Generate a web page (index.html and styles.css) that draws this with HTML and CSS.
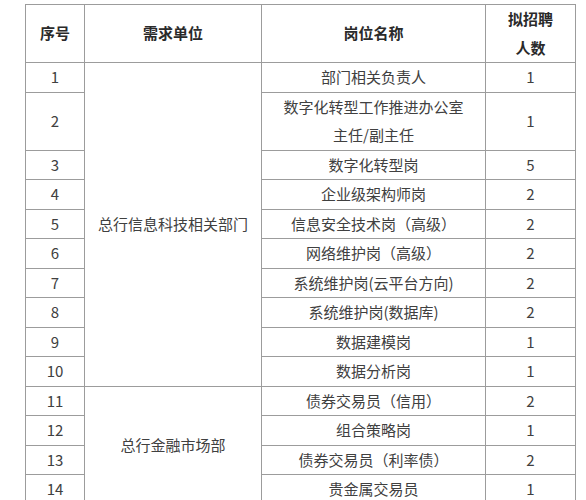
FILE: index.html
```html
<!DOCTYPE html>
<html lang="zh-CN">
<head>
<meta charset="utf-8">
<link rel="stylesheet" href="styles.css">
</head>
<body>
<table class="jobs">
  <colgroup>
    <col class="c-no">
    <col class="c-unit">
    <col class="c-post">
    <col class="c-num">
  </colgroup>
  <thead>
    <tr class="head">
      <th>序号</th>
      <th>需求单位</th>
      <th>岗位名称</th>
      <th>拟招聘<br>人数</th>
    </tr>
  </thead>
  <tbody>
    <tr><td>1</td><td rowspan="10">总行信息科技相关部门</td><td>部门相关负责人</td><td>1</td></tr>
    <tr><td>2</td><td>数字化转型工作推进办公室<br>主任/副主任</td><td>1</td></tr>
    <tr><td>3</td><td>数字化转型岗</td><td>5</td></tr>
    <tr><td>4</td><td>企业级架构师岗</td><td>2</td></tr>
    <tr><td>5</td><td>信息安全技术岗（高级）</td><td>2</td></tr>
    <tr><td>6</td><td>网络维护岗（高级）</td><td>2</td></tr>
    <tr><td>7</td><td>系统维护岗(云平台方向)</td><td>2</td></tr>
    <tr><td>8</td><td>系统维护岗(数据库)</td><td>2</td></tr>
    <tr><td>9</td><td>数据建模岗</td><td>1</td></tr>
    <tr><td>10</td><td>数据分析岗</td><td>1</td></tr>
    <tr><td>11</td><td rowspan="4">总行金融市场部</td><td>债券交易员（信用）</td><td>2</td></tr>
    <tr><td>12</td><td>组合策略岗</td><td>1</td></tr>
    <tr><td>13</td><td>债券交易员（利率债）</td><td>2</td></tr>
    <tr><td>14</td><td>贵金属交易员</td><td>1</td></tr>
  </tbody>
</table>
</body>
</html>
```
FILE: styles.css
```css
html, body {
  margin: 0;
  padding: 0;
  background: #ffffff;
}
body {
  font-family: "Microsoft YaHei", "Noto Sans CJK SC", "Noto Sans", sans-serif;
  color: #404040;
}
.jobs {
  border-collapse: collapse;
  margin: 4px 0 0 25px;
  width: 551px;
  table-layout: fixed;
  font-size: 15px;
}
.c-no { width: 59px; }
.c-unit { width: 177px; }
.c-post { width: 224px; }
.c-num { width: 90px; }
.jobs th,
.jobs td {
  border: 1px solid #9c9c9c;
  text-align: center;
  vertical-align: middle;
  padding: 0;
  line-height: 28.5px;
}
.jobs th {
  font-weight: bold;
  color: #2a2a2a;
}
```
